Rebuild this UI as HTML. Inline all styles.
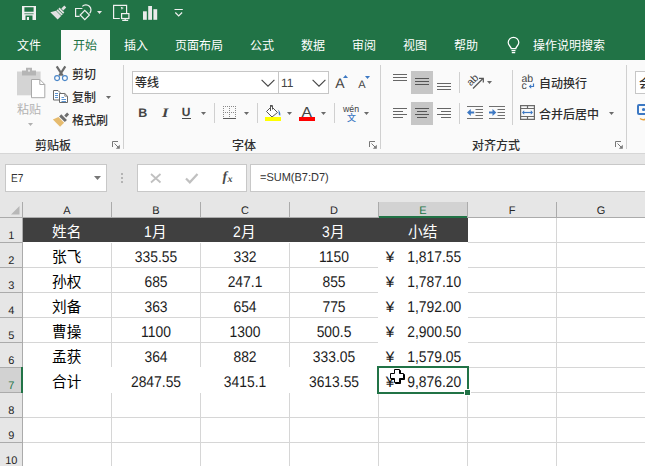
<!DOCTYPE html>
<html lang="zh-CN"><head><meta charset="utf-8"><title>Excel</title><style>
html,body{margin:0;padding:0;overflow:hidden}
#app{position:absolute;left:0;top:0;width:645px;height:466px;overflow:hidden;background:#fff}
body{width:645px;height:466px;position:relative;overflow:hidden;background:#fff;font-family:"Liberation Sans",sans-serif}
.b,.i,.t,.x{position:absolute;display:block}
.i,.t{overflow:visible}
.t text{font-family:"Liberation Sans","Noto Sans CJK SC",sans-serif;font-size:1000px}
.x{white-space:nowrap;line-height:1.150;font-family:"Liberation Sans",sans-serif;text-rendering:geometricPrecision}
</style></head>
<body>
<div id="app">
<header id="top">
<div class="b" style="left:0px;top:0px;width:645px;height:60px;background:#217346"></div>
<div class="b" style="left:61px;top:30px;width:49px;height:31px;background:#fafafa"></div>
<svg class="i" style="left:21px;top:5px" width="16" height="16" viewBox="21 5 16 16" ><path fill-rule="evenodd" fill="#f0f0f0" d="M22 6h14v14H22z M24.4 7.2v4.6h9.2V7.2z M25.5 15.5v4.5h7v-4.5z"/><path d="M24.4 13.2h9.2v1.1h-9.2z" fill="#217346" opacity=".75"/><rect x="26.9" y="17" width="2.1" height="3" fill="#f0f0f0"/></svg>
<svg class="i" style="left:48px;top:3px" width="22" height="20" viewBox="48 3 22 20" ><g transform="translate(65.4 6.7) rotate(135)"><path d="M0 -1.15h4.2v2.7H0z" fill="#e2e2e2"/><path d="M4.8 -3.3h1.8v6.8h-1.8z" fill="#e2e2e2"/><path d="M7.2 -3.5h1.9v7.2h-1.9z" fill="#e2e2e2"/><path d="M9.6 -3.6h5v10.3l-5 -3z" fill="#e2e2e2"/></g></svg>
<svg class="i" style="left:74px;top:3px" width="20" height="19" viewBox="74 3 20 19" ><g fill="none" stroke="#f0f0f0" stroke-width="1.2"><path d="M82.4 8.5H75.6v7.9h4"/><path d="M82.3 6.4A5 5 0 1 1 89.6 13.3"/><path d="M84.8 10.4l4.6 4.6-4.6 4.6-4.6-4.6z" fill="#217346"/></g></svg>
<svg class="i" style="left:97px;top:11px" width="5" height="3" viewBox="0 0 5 3" ><path d="M0 0h5L2.5 3z" fill="#e8e8e8"/></svg>
<svg class="i" style="left:112px;top:3px" width="19" height="19" viewBox="112 3 19 19" ><g fill="none" stroke="#f0f0f0" stroke-width="1.2"><path d="M119.8 18.5H113.6V5.4h13v8"/><rect x="121.6" y="13.6" width="7.3" height="4.9" fill="#217346"/><path d="M125.2 18.5v1.8 M122.2 20.3h6"/></g><path d="M120.6 6.8l3.3 1.2-1.4.6-.600 1.5z" fill="#f0f0f0"/></svg>
<svg class="i" style="left:143px;top:6px" width="15" height="14" viewBox="0 0 15 14" ><g fill="#ebebeb"><rect x="0" y="5.3" width="3.8" height="8.5"/><rect x="5.2" y="0" width="3.8" height="13.8"/><rect x="10.4" y="3.2" width="3.8" height="10.6"/></g></svg>
<svg class="i" style="left:174px;top:8px" width="10" height="9" viewBox="0 0 10 9" ><path d="M.5 1.5h8.3" stroke="#f0f0f0" fill="none"/><path d="M1.3 4.5l3.4 3.5 3.4-3.5" stroke="#f0f0f0" fill="none" stroke-width="1.2"/></svg>
<nav>
<svg class="t " style="left:17px;top:38.6px;" width="24" height="12" viewBox="0 -880 2000 1000"><text x="0" y="0" fill="#fff">文件</text></svg>
<svg class="t " style="left:124px;top:38.6px;" width="24" height="12" viewBox="0 -880 2000 1000"><text x="0" y="0" fill="#fff">插入</text></svg>
<svg class="t " style="left:175px;top:38.6px;" width="48" height="12" viewBox="0 -880 4000 1000"><text x="0" y="0" fill="#fff">页面布局</text></svg>
<svg class="t " style="left:250px;top:38.6px;" width="24" height="12" viewBox="0 -880 2000 1000"><text x="0" y="0" fill="#fff">公式</text></svg>
<svg class="t " style="left:301px;top:38.6px;" width="24" height="12" viewBox="0 -880 2000 1000"><text x="0" y="0" fill="#fff">数据</text></svg>
<svg class="t " style="left:352px;top:38.6px;" width="24" height="12" viewBox="0 -880 2000 1000"><text x="0" y="0" fill="#fff">审阅</text></svg>
<svg class="t " style="left:403px;top:38.6px;" width="24" height="12" viewBox="0 -880 2000 1000"><text x="0" y="0" fill="#fff">视图</text></svg>
<svg class="t " style="left:454px;top:38.6px;" width="24" height="12" viewBox="0 -880 2000 1000"><text x="0" y="0" fill="#fff">帮助</text></svg>
<svg class="t " style="left:533px;top:38.6px;" width="72" height="12" viewBox="0 -880 6000 1000"><text x="0" y="0" fill="#fff">操作说明搜索</text></svg>
<svg class="t " style="left:73px;top:38.6px;" width="24" height="12" viewBox="0 -880 2000 1000"><text x="0" y="0" fill="#217346">开始</text></svg>
</nav>
<svg class="i" style="left:506px;top:37px" width="15" height="18" viewBox="0 0 15 18" ><g fill="none" stroke="#fff" stroke-width="1.25"><path d="M5.2 11.6c0-2-3-3-3-6a5.3 5.3 0 0 1 10.6 0c0 3-3 4-3 6z"/><path d="M5.5 13.5h4 M5.8 15.5h3.4"/></g></svg>
</header>
<section id="ribbon">
<div class="b" style="left:0px;top:60px;width:645px;height:93px;background:#fafafa"></div>
<div class="b" style="left:61px;top:60px;width:49px;height:1px;background:#fafafa"></div>
<div class="b" style="left:0px;top:153px;width:645px;height:1px;background:#d6d6d6"></div>
<div class="b" style="left:123px;top:65px;width:1px;height:84px;background:#d0d0d0"></div>
<div class="b" style="left:380px;top:65px;width:1px;height:84px;background:#d0d0d0"></div>
<div class="b" style="left:626px;top:65px;width:1px;height:84px;background:#d0d0d0"></div>
<svg class="i" style="left:16px;top:66px" width="31" height="34" viewBox="16 66 31 34" ><rect x="17" y="71.5" width="23.6" height="23.8" fill="#d4d4d4"/><path d="M22 70.5h4V67.8h6v2.7h4v5H22z" fill="#b5b5b5"/><rect x="28" y="69.6" width="2" height="2" fill="#e4e4e4"/><path d="M31.5 79.5h8.3l5 5v13.2H31.5z" fill="#fff" stroke="#a9a9a9"/><path d="M39.8 79.5v5h5" fill="none" stroke="#a9a9a9"/></svg>
<svg class="t " style="left:17px;top:102.6px;" width="24" height="12" viewBox="0 -880 2000 1000"><text x="0" y="0" fill="#b2b2b2">粘贴</text></svg>
<svg class="i" style="left:28px;top:123px" width="5" height="3" viewBox="0 0 5 3" ><path d="M0 0h5L2.5 3z" fill="#b0b0b0"/></svg>
<svg class="i" style="left:52px;top:64px" width="18" height="19" viewBox="52 64 18 19" ><path d="M56.7 66.4l6 9.2 M65.3 66.4l-6 9.2" stroke="#6a6a6a" stroke-width="2.2" fill="none"/><circle cx="57.1" cy="78.1" r="2.45" stroke="#4a86c8" stroke-width="1.15" fill="none"/><circle cx="64.9" cy="78.1" r="2.45" stroke="#4a86c8" stroke-width="1.15" fill="none"/></svg>
<svg class="t " style="left:72.2px;top:68.2px;" width="24" height="12" viewBox="0 -880 2000 1000"><text x="0" y="0" fill="#2e2e2e" font-weight="500">剪切</text></svg>
<svg class="i" style="left:52px;top:89px" width="18" height="16" viewBox="52 89 18 16" ><g fill="#fff" stroke="#6a6a6a"><path d="M53.5 90.5h4.5l2 2v7.5h-6.5z"/><path d="M59.5 93.5h5.3l2.7 2.7v6.3h-8z"/></g><path d="M64.8 93.5v2.7h2.7" fill="none" stroke="#6a6a6a" stroke-width=".8"/><g stroke="#5b93d0" fill="none"><path d="M55 93.5h3 M55 95.5h3 M55 97.5h3 M61.5 97.5h2.5 M61.5 99.5h4.5 M61.5 101.5h4.5"/></g></svg>
<svg class="t " style="left:72.2px;top:91.2px;" width="24" height="12" viewBox="0 -880 2000 1000"><text x="0" y="0" fill="#2e2e2e" font-weight="500">复制</text></svg>
<svg class="i" style="left:106px;top:96px" width="5" height="3" viewBox="0 0 5 3" ><path d="M0 0h5L2.5 3z" fill="#6a6a6a"/></svg>
<svg class="i" style="left:50px;top:109px" width="22" height="20" viewBox="50 109 22 20" ><g transform="translate(68.2 113.7) rotate(135)"><path d="M0 -1.25h4v2.8H0z" fill="#6e6e6e"/><path d="M5.3 -3.5h3v8h-3z" fill="#6e6e6e"/><path d="M9.3 -3.5h5.7v10.2l-5.7 -2.2z" fill="#e6bb6e"/></g></svg>
<svg class="t " style="left:72.2px;top:114px;" width="36" height="12" viewBox="0 -880 3000 1000"><text x="0" y="0" fill="#2e2e2e" font-weight="500">格式刷</text></svg>
<svg class="t " style="left:35.2px;top:138.8px;" width="36" height="12" viewBox="0 -880 3000 1000"><text x="0" y="0" fill="#2e2e2e" font-weight="500">剪贴板</text></svg>
<svg class="i" style="left:112px;top:141px" width="8" height="8" viewBox="0 0 8 8" ><path d="M.5 6V.5H6" fill="none" stroke="#777"/><path d="M2.5 2.5l4.5 4.5" stroke="#777" fill="none"/><path d="M7.8 3.8v4h-4z" fill="#777"/></svg>
<div class="b" style="left:132px;top:71px;width:147px;height:23px;background:#fff;border:1px solid #c6c6c6;box-sizing:border-box"></div>
<div class="b" style="left:279px;top:71px;width:50px;height:23px;background:#fff;border:1px solid #c6c6c6;border-left:none;box-sizing:border-box"></div>
<svg class="t " style="left:135px;top:76.4px;" width="24" height="12" viewBox="0 -880 2000 1000"><text x="0" y="0" fill="#2e2e2e" font-weight="500">等线</text></svg>
<svg class="i" style="left:261px;top:79px" width="14" height="9" viewBox="0 0 14 9" ><path d="M.6 .8L7 7.2 13.4 .8" fill="none" stroke="#444" stroke-width="1.1"/></svg>
<span class="x " style="left:281px;top:77px;font-size:12px;color:#444;">11</span>
<svg class="i" style="left:311.5px;top:79px" width="14" height="9" viewBox="0 0 14 9" ><path d="M.6 .8L7 7.2 13.4 .8" fill="none" stroke="#444" stroke-width="1.1"/></svg>
<span class="x " style="left:335.3px;top:75px;font-size:14px;color:#444;">A</span>
<svg class="i" style="left:343px;top:75px" width="5" height="3" viewBox="0 0 5 3" ><path d="M0 3h5L2.5 0z" fill="#3c78c3"/></svg>
<span class="x " style="left:358.2px;top:79px;font-size:11px;color:#444;">A</span>
<svg class="i" style="left:365px;top:75.5px" width="5" height="3" viewBox="0 0 5 3" ><path d="M0 0h5L2.5 3z" fill="#3c78c3"/></svg>
<span class="x " style="left:138.3px;top:106px;font-size:12.5px;color:#444;font-weight:bold;">B</span>
<span class="x " style="left:161.6px;top:106px;font-size:13px;color:#444;font-style:italic;font-family:'Liberation Serif',serif;font-weight:bold;transform:scaleX(1.25);transform-origin:0 0">I</span>
<span class="x " style="left:181.8px;top:106px;font-size:12px;color:#444;font-weight:bold;">U</span>
<div class="b" style="left:182px;top:118px;width:9px;height:1px;background:#4a4a4a"></div>
<svg class="i" style="left:201px;top:112px" width="5" height="3" viewBox="0 0 5 3" ><path d="M0 0h5L2.5 3z" fill="#6a6a6a"/></svg>
<div class="b" style="left:214px;top:103px;width:1px;height:20px;background:#d0d0d0"></div>
<svg class="i" style="left:223px;top:106px" width="13" height="13" viewBox="0 0 13 13" ><g stroke="#8a8a8a" stroke-dasharray="1 1" fill="none"><path d="M0 .5h13 M.5 0v12 M12.5 0v12 M6.5 0v12 M0 6.5h13"/></g><path d="M0 12.5h13" stroke="#5a5a5a"/></svg>
<svg class="i" style="left:244px;top:112px" width="5" height="3" viewBox="0 0 5 3" ><path d="M0 0h5L2.5 3z" fill="#6a6a6a"/></svg>
<div class="b" style="left:257px;top:103px;width:1px;height:20px;background:#d0d0d0"></div>
<svg class="i" style="left:264px;top:104px" width="18" height="18" viewBox="0 0 18 18" ><path d="M7.5 2.5l6 6-5.5 4.5-5.5-5.5z" fill="#fff" stroke="#555"/><path d="M6.5 1v6" stroke="#555" fill="none"/><path d="M6 1.5h2.5v4" stroke="#555" fill="none"/><path d="M13.6 5.4c2.3 1.5 3.2 4 2.6 6.3c-1-.2-1.7-1.3-1.5-2.6c.2-1.4-.2-2.7-1.1-3.7z" fill="#3c78c3"/><rect x="1" y="13" width="16" height="4" fill="#ffff00"/></svg>
<svg class="i" style="left:287px;top:112px" width="5" height="3" viewBox="0 0 5 3" ><path d="M0 0h5L2.5 3z" fill="#6a6a6a"/></svg>
<span class="x " style="left:302.4px;top:105px;font-size:14.5px;color:#444;transform:scaleX(1.08);transform-origin:50% 0">A</span>
<div class="b" style="left:299px;top:117px;width:16px;height:4px;background:#ff0000"></div>
<svg class="i" style="left:321px;top:112px" width="5" height="3" viewBox="0 0 5 3" ><path d="M0 0h5L2.5 3z" fill="#6a6a6a"/></svg>
<div class="b" style="left:334px;top:103px;width:1px;height:20px;background:#d0d0d0"></div>
<span class="x " style="left:342.6px;top:105px;font-size:9.5px;color:#444;transform:scaleX(.92);transform-origin:0 0">wén</span>
<svg class="t " style="left:346.5px;top:112.8px;" width="9" height="9" viewBox="0 -880 1000 1000"><text x="0" y="0" fill="#3c78c3" font-weight="500">文</text></svg>
<svg class="i" style="left:364px;top:112px" width="5" height="3" viewBox="0 0 5 3" ><path d="M0 0h5L2.5 3z" fill="#6a6a6a"/></svg>
<svg class="t " style="left:232px;top:138.8px;" width="24" height="12" viewBox="0 -880 2000 1000"><text x="0" y="0" fill="#2e2e2e" font-weight="500">字体</text></svg>
<svg class="i" style="left:369px;top:141px" width="8" height="8" viewBox="0 0 8 8" ><path d="M.5 6V.5H6" fill="none" stroke="#777"/><path d="M2.5 2.5l4.5 4.5" stroke="#777" fill="none"/><path d="M7.8 3.8v4h-4z" fill="#777"/></svg>
<div class="b" style="left:411px;top:71px;width:22px;height:23px;background:#c6c6c6"></div>
<div class="b" style="left:411px;top:102px;width:22px;height:23px;background:#c6c6c6"></div>
<div class="b" style="left:393px;top:74px;width:14px;height:1px;background:#666"></div><div class="b" style="left:393px;top:77px;width:14px;height:1px;background:#666"></div><div class="b" style="left:393px;top:80px;width:14px;height:1px;background:#666"></div>
<div class="b" style="left:415px;top:78px;width:14px;height:1px;background:#555"></div><div class="b" style="left:415px;top:81px;width:14px;height:1px;background:#555"></div><div class="b" style="left:415px;top:84px;width:14px;height:1px;background:#555"></div>
<div class="b" style="left:437px;top:83px;width:14px;height:1px;background:#666"></div><div class="b" style="left:437px;top:86px;width:14px;height:1px;background:#666"></div><div class="b" style="left:437px;top:89px;width:14px;height:1px;background:#666"></div>
<div class="b" style="left:393px;top:108px;width:14px;height:1px;background:#666"></div><div class="b" style="left:393px;top:111px;width:10px;height:1px;background:#666"></div><div class="b" style="left:393px;top:114px;width:14px;height:1px;background:#666"></div><div class="b" style="left:393px;top:117px;width:10px;height:1px;background:#666"></div>
<div class="b" style="left:415px;top:108px;width:14px;height:1px;background:#555"></div><div class="b" style="left:417px;top:111px;width:10px;height:1px;background:#555"></div><div class="b" style="left:415px;top:114px;width:14px;height:1px;background:#555"></div><div class="b" style="left:417px;top:117px;width:10px;height:1px;background:#555"></div>
<div class="b" style="left:437px;top:108px;width:14px;height:1px;background:#666"></div><div class="b" style="left:441px;top:111px;width:10px;height:1px;background:#666"></div><div class="b" style="left:437px;top:114px;width:14px;height:1px;background:#666"></div><div class="b" style="left:441px;top:117px;width:10px;height:1px;background:#666"></div>
<div class="b" style="left:459px;top:72px;width:1px;height:21px;background:#d0d0d0"></div>
<div class="b" style="left:459px;top:103px;width:1px;height:21px;background:#d0d0d0"></div>
<svg class="i" style="left:464px;top:70px" width="24" height="22" viewBox="0 0 24 22" ><text transform="translate(11 12.4) rotate(-45)" text-anchor="middle" font-family="Liberation Sans, sans-serif" font-size="10.5" fill="#444">ab</text><path d="M9 18.5L19 8.5" stroke="#555" stroke-width="1.2" fill="none"/><path d="M15 8.3h4.3v4.3" stroke="#555" stroke-width="1.2" fill="none"/></svg>
<svg class="i" style="left:487px;top:80.5px" width="5" height="3" viewBox="0 0 5 3" ><path d="M0 0h5L2.5 3z" fill="#6a6a6a"/></svg>
<svg class="i" style="left:467px;top:106px" width="16" height="13" viewBox="0 0 16 13" ><g stroke="#707070" fill="none"><path d="M0 .5h16 M8.5 3.5h7.5 M8.5 6.5h7.5 M8.5 9.5h7.5 M0 12.5h16"/></g><path d="M3 6.5h4.2" stroke="#3c78c3" stroke-width="2" fill="none"/><path d="M3.8 3L0 6.5l3.8 3.5z" fill="#3c78c3"/></svg>
<svg class="i" style="left:489px;top:106px" width="16" height="13" viewBox="0 0 16 13" ><g stroke="#707070" fill="none"><path d="M0 .5h16 M8.5 3.5h7.5 M8.5 6.5h7.5 M8.5 9.5h7.5 M0 12.5h16"/></g><path d="M0 6.5h4" stroke="#3c78c3" stroke-width="2" fill="none"/><path d="M3.5 3l3.8 3.500-3.800 3.500z" fill="#3c78c3"/></svg>
<svg class="t " style="left:471.5px;top:138.8px;" width="48" height="12" viewBox="0 -880 4000 1000"><text x="0" y="0" fill="#2e2e2e" font-weight="500">对齐方式</text></svg>
<div class="b" style="left:512px;top:70px;width:1px;height:55px;background:#d0d0d0"></div>
<span class="x " style="left:521.4px;top:73px;font-size:10.5px;color:#444;">ab</span>
<span class="x " style="left:521.6px;top:80px;font-size:10.5px;color:#444;">c</span>
<svg class="i" style="left:528px;top:83px" width="7" height="6" viewBox="0 0 7 6" ><path d="M5.5 .5v3H1.5" stroke="#3c78c3" stroke-width="1.2" fill="none"/><path d="M3.2 1.2l-2.4 2.3 2.4 2.3z" fill="#3c78c3"/></svg>
<svg class="t " style="left:538.6px;top:76.600px;" width="48" height="12" viewBox="0 -880 4000 1000"><text x="0" y="0" fill="#2e2e2e" font-weight="500">自动换行</text></svg>
<svg class="i" style="left:520px;top:105px" width="15" height="15" viewBox="0 0 15 15" ><g stroke="#6a6a6a" fill="none" stroke-width="1.2"><path d="M.6 .6h13.8v13.8H.6z M.6 3.5h13.8 M.6 11.5h13.8 M7.5 .6v2.9 M7.5 11.5v2.9"/></g><path d="M3 7.5h9" stroke="#3c78c3" stroke-width="1.2" fill="none"/><path d="M4.2 5.3L2 7.5l2.2 2.2z M10.8 5.3L13 7.5l-2.2 2.2z" fill="#3c78c3"/></svg>
<svg class="t " style="left:538.6px;top:107.6px;" width="60" height="12" viewBox="0 -880 5000 1000"><text x="0" y="0" fill="#2e2e2e" font-weight="500">合并后居中</text></svg>
<svg class="i" style="left:609px;top:112px" width="5" height="3" viewBox="0 0 5 3" ><path d="M0 0h5L2.5 3z" fill="#6a6a6a"/></svg>
<svg class="i" style="left:615px;top:141px" width="8" height="8" viewBox="0 0 8 8" ><path d="M.5 6V.5H6" fill="none" stroke="#777"/><path d="M2.5 2.5l4.5 4.5" stroke="#777" fill="none"/><path d="M7.8 3.8v4h-4z" fill="#777"/></svg>
<div class="b" style="left:635px;top:71px;width:12px;height:23px;background:#fff;border:1px solid #c6c6c6;box-sizing:border-box"></div>
<svg class="t " style="left:639px;top:76.8px;" width="12" height="12" viewBox="0 -880 1000 1000"><text x="0" y="0" fill="#2e2e2e" font-weight="500">会</text></svg>
<svg class="i" style="left:637px;top:105px" width="8" height="16" viewBox="0 0 8 16" ><rect x="1" y="0" width="10" height="9" rx="1" fill="none" stroke="#3c78c3" stroke-width="2"/><circle cx="6.5" cy="4.5" r="1.6" fill="#3c78c3"/><path d="M3 13.5c2 1.5 4 1.5 6 .5" stroke="#e9a23b" fill="none" stroke-width="1.5"/></svg>
</section>
<section id="fbar">
<div class="b" style="left:0px;top:154px;width:645px;height:48px;background:#e6e6e6"></div>
<div class="b" style="left:5px;top:164px;width:102px;height:28px;background:#fff;border:1px solid #c8c8c8;box-sizing:border-box"></div>
<span class="x " style="left:10.9px;top:173px;font-size:11.5px;color:#333;transform:scaleX(.88);transform-origin:0 0">E7</span>
<svg class="i" style="left:94px;top:175.5px" width="7" height="4" viewBox="0 0 7 4" ><path d="M0 0h7L3.5 4z" fill="#777"/></svg>
<div class="b" style="left:121px;top:173px;width:2px;height:2px;background:#b4b4b4"></div>
<div class="b" style="left:121px;top:177px;width:2px;height:2px;background:#b4b4b4"></div>
<div class="b" style="left:121px;top:181px;width:2px;height:2px;background:#b4b4b4"></div>
<div class="b" style="left:137px;top:164px;width:110px;height:28px;background:#fff;border:1px solid #c8c8c8;box-sizing:border-box"></div>
<svg class="i" style="left:150px;top:173px" width="12" height="11" viewBox="0 0 12 11" ><path d="M1 1l9.5 8.5 M10.5 1L1 9.5" stroke="#c0c0c0" stroke-width="1.8" fill="none"/></svg>
<svg class="i" style="left:185px;top:173px" width="14" height="11" viewBox="0 0 14 11" ><path d="M1 5.5l3.8 3.8L12.5 1" stroke="#c0c0c0" stroke-width="2.2" fill="none"/></svg>
<span class="x " style="left:222.6px;top:170px;font-size:14px;color:#4a4a4a;font-style:italic;font-family:'Liberation Serif',serif;font-weight:bold;">f</span>
<span class="x " style="left:227.6px;top:174px;font-size:10px;color:#4a4a4a;font-style:italic;font-family:'Liberation Serif',serif;font-weight:bold;">x</span>
<div class="b" style="left:250px;top:164px;width:400px;height:28px;background:#fff;border:1px solid #c8c8c8;box-sizing:border-box"></div>
<span class="x " style="left:260px;top:172px;font-size:11.5px;color:#333;transform:scaleX(.955);transform-origin:0 0">=SUM(B7:D7)</span>
</section>
<main id="sheet">
<div class="b" style="left:0px;top:202px;width:645px;height:264px;background:#fff"></div>
<div class="b" style="left:0px;top:202px;width:645px;height:16px;background:#e6e6e6"></div>
<div class="b" style="left:0px;top:217px;width:645px;height:1px;background:#ababab"></div>
<div class="b" style="left:0px;top:218px;width:23px;height:248px;background:#e6e6e6"></div>
<div class="b" style="left:22px;top:202px;width:1px;height:264px;background:#ababab"></div>
<div class="b" style="left:379px;top:202px;width:89px;height:14px;background:#d2d2d2"></div>
<div class="b" style="left:378px;top:216px;width:90px;height:2px;background:#217346"></div>
<div class="b" style="left:0px;top:368px;width:21px;height:25px;background:#d2d2d2"></div>
<div class="b" style="left:21px;top:367px;width:2px;height:26px;background:#217346"></div>
<svg class="i" style="left:10px;top:206px" width="10" height="9" viewBox="0 0 10 9" ><path d="M9.5 0v8.5H1z" fill="#b8b8b8"/></svg>
<span class="x " style="left:47px;top:205px;font-size:11px;color:#262626;width:40px;text-align:center">A</span>
<div class="b" style="left:111px;top:202px;width:1px;height:16px;background:#ababab"></div>
<span class="x " style="left:136px;top:205px;font-size:11px;color:#262626;width:40px;text-align:center">B</span>
<div class="b" style="left:200px;top:202px;width:1px;height:16px;background:#ababab"></div>
<span class="x " style="left:225px;top:205px;font-size:11px;color:#262626;width:40px;text-align:center">C</span>
<div class="b" style="left:289px;top:202px;width:1px;height:16px;background:#ababab"></div>
<span class="x " style="left:314px;top:205px;font-size:11px;color:#262626;width:40px;text-align:center">D</span>
<div class="b" style="left:378px;top:202px;width:1px;height:16px;background:#ababab"></div>
<span class="x " style="left:403px;top:205px;font-size:11px;color:#217346;width:40px;text-align:center">E</span>
<div class="b" style="left:467px;top:202px;width:1px;height:16px;background:#ababab"></div>
<span class="x " style="left:492px;top:205px;font-size:11px;color:#262626;width:40px;text-align:center">F</span>
<div class="b" style="left:556px;top:202px;width:1px;height:16px;background:#ababab"></div>
<span class="x " style="left:581px;top:205px;font-size:11px;color:#262626;width:40px;text-align:center">G</span>
<div class="b" style="left:645px;top:202px;width:1px;height:16px;background:#ababab"></div>
<span class="x " style="left:0px;top:230px;font-size:11px;color:#262626;width:22.6px;text-align:center">1</span>
<div class="b" style="left:0px;top:242px;width:22px;height:1px;background:#ababab"></div>
<span class="x " style="left:0px;top:255px;font-size:11px;color:#262626;width:22.6px;text-align:center">2</span>
<div class="b" style="left:0px;top:267px;width:22px;height:1px;background:#ababab"></div>
<span class="x " style="left:0px;top:280px;font-size:11px;color:#262626;width:22.6px;text-align:center">3</span>
<div class="b" style="left:0px;top:292px;width:22px;height:1px;background:#ababab"></div>
<span class="x " style="left:0px;top:305px;font-size:11px;color:#262626;width:22.6px;text-align:center">4</span>
<div class="b" style="left:0px;top:317px;width:22px;height:1px;background:#ababab"></div>
<span class="x " style="left:0px;top:330px;font-size:11px;color:#262626;width:22.6px;text-align:center">5</span>
<div class="b" style="left:0px;top:342px;width:22px;height:1px;background:#ababab"></div>
<span class="x " style="left:0px;top:355px;font-size:11px;color:#262626;width:22.6px;text-align:center">6</span>
<div class="b" style="left:0px;top:367px;width:21px;height:1px;background:#ababab"></div>
<span class="x " style="left:0px;top:380px;font-size:11px;color:#217346;width:22.6px;text-align:center">7</span>
<div class="b" style="left:0px;top:392px;width:21px;height:1px;background:#ababab"></div>
<span class="x " style="left:0px;top:405px;font-size:11px;color:#262626;width:22.6px;text-align:center">8</span>
<div class="b" style="left:0px;top:417px;width:22px;height:1px;background:#ababab"></div>
<span class="x " style="left:0px;top:430px;font-size:11px;color:#262626;width:22.6px;text-align:center">9</span>
<div class="b" style="left:0px;top:442px;width:22px;height:1px;background:#ababab"></div>
<span class="x " style="left:0px;top:455px;font-size:11px;color:#262626;width:22.6px;text-align:center">10</span>
<div class="b" style="left:0px;top:467px;width:22px;height:1px;background:#ababab"></div>
<div class="b" style="left:23px;top:242px;width:622px;height:1px;background:#d6d6d6"></div>
<div class="b" style="left:23px;top:267px;width:622px;height:1px;background:#d6d6d6"></div>
<div class="b" style="left:23px;top:292px;width:622px;height:1px;background:#d6d6d6"></div>
<div class="b" style="left:23px;top:317px;width:622px;height:1px;background:#d6d6d6"></div>
<div class="b" style="left:23px;top:342px;width:622px;height:1px;background:#d6d6d6"></div>
<div class="b" style="left:23px;top:367px;width:622px;height:1px;background:#d6d6d6"></div>
<div class="b" style="left:23px;top:392px;width:622px;height:1px;background:#d6d6d6"></div>
<div class="b" style="left:23px;top:417px;width:622px;height:1px;background:#d6d6d6"></div>
<div class="b" style="left:23px;top:442px;width:622px;height:1px;background:#d6d6d6"></div>
<div class="b" style="left:23px;top:467px;width:622px;height:1px;background:#d6d6d6"></div>
<div class="b" style="left:111px;top:218px;width:1px;height:248px;background:#d6d6d6"></div>
<div class="b" style="left:200px;top:218px;width:1px;height:248px;background:#d6d6d6"></div>
<div class="b" style="left:289px;top:218px;width:1px;height:248px;background:#d6d6d6"></div>
<div class="b" style="left:378px;top:218px;width:1px;height:248px;background:#d6d6d6"></div>
<div class="b" style="left:467px;top:218px;width:1px;height:248px;background:#d6d6d6"></div>
<div class="b" style="left:556px;top:218px;width:1px;height:248px;background:#d6d6d6"></div>
<div class="b" style="left:645px;top:218px;width:1px;height:248px;background:#d6d6d6"></div>
<div class="b" style="left:23px;top:218px;width:445px;height:24px;background:#404040"></div>
<div class="b" style="left:23px;top:242px;width:445px;height:1px;background:#fff"></div>
<div class="b" style="left:379px;top:243px;width:89px;height:125px;background:#fff"></div>
<div class="b" style="left:378px;top:243px;width:1px;height:124px;background:#fff"></div>
<div class="b" style="left:23px;top:367px;width:356px;height:26px;background:#fff"></div>
<div class="b" style="left:377px;top:366px;width:92px;height:28px;border:2px solid #217346;box-sizing:border-box"></div>
<div class="b" style="left:464px;top:389px;width:7px;height:7px;background:#217346;border:1px solid #fff;box-sizing:border-box"></div>
<svg class="t " style="left:52.33px;top:223.6px;" width="29.34" height="14.67" viewBox="0 -880 2000 1000"><text x="0" y="0" fill="#fff">姓名</text></svg>
<svg class="t " style="left:408.33px;top:223.6px;" width="29.34" height="14.67" viewBox="0 -880 2000 1000"><text x="0" y="0" fill="#fff">小结</text></svg>
<span class="x " style="left:144.4px;top:224px;font-size:15.5px;color:#fff;transform:scaleX(0.895);transform-origin:0 50%">1</span>
<svg class="t " style="left:152.4px;top:223.6px;" width="14.67" height="14.67" viewBox="0 -880 1000 1000"><text x="0" y="0" fill="#fff">月</text></svg>
<span class="x " style="left:233.4px;top:224px;font-size:15.5px;color:#fff;transform:scaleX(0.895);transform-origin:0 50%">2</span>
<svg class="t " style="left:241.4px;top:223.6px;" width="14.67" height="14.67" viewBox="0 -880 1000 1000"><text x="0" y="0" fill="#fff">月</text></svg>
<span class="x " style="left:322.4px;top:224px;font-size:15.5px;color:#fff;transform:scaleX(0.895);transform-origin:0 50%">3</span>
<svg class="t " style="left:330.4px;top:223.6px;" width="14.67" height="14.67" viewBox="0 -880 1000 1000"><text x="0" y="0" fill="#fff">月</text></svg>
<svg class="t " style="left:52.33px;top:248.6px;" width="29.34" height="14.67" viewBox="0 -880 2000 1000"><text x="0" y="0" fill="#000">张飞</text></svg>
<span class="x " style="left:112px;top:249px;font-size:15.5px;color:#1c1c1c;width:88px;text-align:center;transform:scaleX(0.895);transform-origin:50% 50%">335.55</span>
<span class="x " style="left:201px;top:249px;font-size:15.5px;color:#1c1c1c;width:88px;text-align:center;transform:scaleX(0.895);transform-origin:50% 50%">332</span>
<span class="x " style="left:290px;top:249px;font-size:15.5px;color:#1c1c1c;width:88px;text-align:center;transform:scaleX(0.895);transform-origin:50% 50%">1150</span>
<span class="x " style="left:385.8px;top:249px;font-size:15.3px;color:#1c1c1c;">¥</span>
<span class="x " style="left:379px;top:249px;font-size:15.5px;color:#1c1c1c;width:82.3px;text-align:right;transform:scaleX(0.895);transform-origin:100% 50%">1,817.55</span>
<svg class="t " style="left:52.33px;top:273.6px;" width="29.34" height="14.67" viewBox="0 -880 2000 1000"><text x="0" y="0" fill="#000">孙权</text></svg>
<span class="x " style="left:112px;top:274px;font-size:15.5px;color:#1c1c1c;width:88px;text-align:center;transform:scaleX(0.895);transform-origin:50% 50%">685</span>
<span class="x " style="left:201px;top:274px;font-size:15.5px;color:#1c1c1c;width:88px;text-align:center;transform:scaleX(0.895);transform-origin:50% 50%">247.1</span>
<span class="x " style="left:290px;top:274px;font-size:15.5px;color:#1c1c1c;width:88px;text-align:center;transform:scaleX(0.895);transform-origin:50% 50%">855</span>
<span class="x " style="left:385.8px;top:274px;font-size:15.3px;color:#1c1c1c;">¥</span>
<span class="x " style="left:379px;top:274px;font-size:15.5px;color:#1c1c1c;width:82.3px;text-align:right;transform:scaleX(0.895);transform-origin:100% 50%">1,787.10</span>
<svg class="t " style="left:52.33px;top:298.6px;" width="29.34" height="14.67" viewBox="0 -880 2000 1000"><text x="0" y="0" fill="#000">刘备</text></svg>
<span class="x " style="left:112px;top:299px;font-size:15.5px;color:#1c1c1c;width:88px;text-align:center;transform:scaleX(0.895);transform-origin:50% 50%">363</span>
<span class="x " style="left:201px;top:299px;font-size:15.5px;color:#1c1c1c;width:88px;text-align:center;transform:scaleX(0.895);transform-origin:50% 50%">654</span>
<span class="x " style="left:290px;top:299px;font-size:15.5px;color:#1c1c1c;width:88px;text-align:center;transform:scaleX(0.895);transform-origin:50% 50%">775</span>
<span class="x " style="left:385.8px;top:299px;font-size:15.3px;color:#1c1c1c;">¥</span>
<span class="x " style="left:379px;top:299px;font-size:15.5px;color:#1c1c1c;width:82.3px;text-align:right;transform:scaleX(0.895);transform-origin:100% 50%">1,792.00</span>
<svg class="t " style="left:52.33px;top:323.6px;" width="29.34" height="14.67" viewBox="0 -880 2000 1000"><text x="0" y="0" fill="#000">曹操</text></svg>
<span class="x " style="left:112px;top:324px;font-size:15.5px;color:#1c1c1c;width:88px;text-align:center;transform:scaleX(0.895);transform-origin:50% 50%">1100</span>
<span class="x " style="left:201px;top:324px;font-size:15.5px;color:#1c1c1c;width:88px;text-align:center;transform:scaleX(0.895);transform-origin:50% 50%">1300</span>
<span class="x " style="left:290px;top:324px;font-size:15.5px;color:#1c1c1c;width:88px;text-align:center;transform:scaleX(0.895);transform-origin:50% 50%">500.5</span>
<span class="x " style="left:385.8px;top:324px;font-size:15.3px;color:#1c1c1c;">¥</span>
<span class="x " style="left:379px;top:324px;font-size:15.5px;color:#1c1c1c;width:82.3px;text-align:right;transform:scaleX(0.895);transform-origin:100% 50%">2,900.50</span>
<svg class="t " style="left:52.33px;top:348.6px;" width="29.34" height="14.67" viewBox="0 -880 2000 1000"><text x="0" y="0" fill="#000">孟获</text></svg>
<span class="x " style="left:112px;top:349px;font-size:15.5px;color:#1c1c1c;width:88px;text-align:center;transform:scaleX(0.895);transform-origin:50% 50%">364</span>
<span class="x " style="left:201px;top:349px;font-size:15.5px;color:#1c1c1c;width:88px;text-align:center;transform:scaleX(0.895);transform-origin:50% 50%">882</span>
<span class="x " style="left:290px;top:349px;font-size:15.5px;color:#1c1c1c;width:88px;text-align:center;transform:scaleX(0.895);transform-origin:50% 50%">333.05</span>
<span class="x " style="left:385.8px;top:349px;font-size:15.3px;color:#1c1c1c;">¥</span>
<span class="x " style="left:379px;top:349px;font-size:15.5px;color:#1c1c1c;width:82.3px;text-align:right;transform:scaleX(0.895);transform-origin:100% 50%">1,579.05</span>
<svg class="t " style="left:52.33px;top:373.6px;" width="29.34" height="14.67" viewBox="0 -880 2000 1000"><text x="0" y="0" fill="#000">合计</text></svg>
<span class="x " style="left:112px;top:374px;font-size:15.5px;color:#1c1c1c;width:88px;text-align:center;transform:scaleX(0.895);transform-origin:50% 50%">2847.55</span>
<span class="x " style="left:201px;top:374px;font-size:15.5px;color:#1c1c1c;width:88px;text-align:center;transform:scaleX(0.895);transform-origin:50% 50%">3415.1</span>
<span class="x " style="left:290px;top:374px;font-size:15.5px;color:#1c1c1c;width:88px;text-align:center;transform:scaleX(0.895);transform-origin:50% 50%">3613.55</span>
<span class="x " style="left:385.8px;top:374px;font-size:15.3px;color:#1c1c1c;">¥</span>
<span class="x " style="left:379px;top:374px;font-size:15.5px;color:#1c1c1c;width:82.3px;text-align:right;transform:scaleX(0.895);transform-origin:100% 50%">9,876.20</span>
<svg class="i" style="left:388px;top:367px" width="19" height="19" viewBox="388 367 19 19" ><path d="M394.5 369.5h5v4h4v5h-4v4h-5v-4h-4v-5h4z" transform="translate(1 1)" fill="#000" stroke="#000"/><path d="M394.5 369.5h5v4h4v5h-4v4h-5v-4h-4v-5h4z" fill="#fff" stroke="#000"/></svg>
</main>
</div>
</body></html>
